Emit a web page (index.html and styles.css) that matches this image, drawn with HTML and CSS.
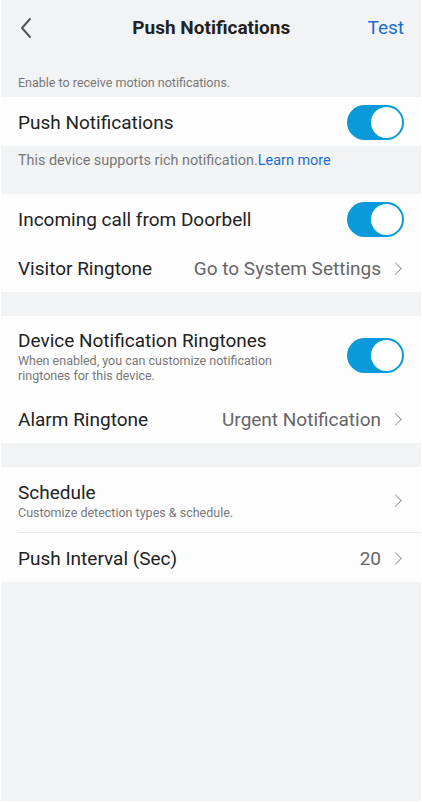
FILE: index.html
```html
<!DOCTYPE html>
<html lang="en">
<head>
    <meta charset="UTF-8">
    <meta name="viewport" content="width=device-width, initial-scale=1.0">
    <title>Push Notifications</title>
    <link rel="stylesheet" href="styles.css">
</head>
<body>
    <div class="screen">
        <header class="topbar">
            <svg class="back" width="14" height="22" viewBox="0 0 14 22">
                <path d="M11 2 L3 11 L11 20" fill="none" stroke="#555" stroke-width="2" stroke-linecap="round" stroke-linejoin="round"/>
            </svg>
            <h1>Push Notifications</h1>
            <span class="test">Test</span>
        </header>

        <p class="note note-top">Enable to receive motion notifications.</p>
        <div class="card">
            <div class="row">
                <span class="label">Push Notifications</span>
                <span class="switch on"></span>
            </div>
        </div>
        <p class="note note-bottom">This device supports rich notification.<a href="#">Learn more</a></p>

        <div class="card">
            <div class="row">
                <span class="label">Incoming call from Doorbell</span>
                <span class="switch on"></span>
            </div>
            <div class="row">
                <span class="label">Visitor Ringtone</span>
                <span class="value">Go to System Settings <i class="chev"></i></span>
            </div>
        </div>

        <div class="card gap">
            <div class="row tall">
                <div class="text">
                    <span class="label">Device Notification Ringtones</span>
                    <span class="sub">When enabled, you can customize notification ringtones for this device.</span>
                </div>
                <span class="switch on"></span>
            </div>
            <div class="row">
                <span class="label">Alarm Ringtone</span>
                <span class="value">Urgent Notification <i class="chev"></i></span>
            </div>
        </div>

        <div class="card gap">
            <div class="row schedule line">
                <div class="text">
                    <span class="label">Schedule</span>
                    <span class="sub">Customize detection types &amp; schedule.</span>
                </div>
                <span class="value"><i class="chev"></i></span>
            </div>
            <div class="row">
                <span class="label">Push Interval (Sec)</span>
                <span class="value">20 <i class="chev"></i></span>
            </div>
        </div>
    </div>
</body>
</html>
```

FILE: styles.css
```css
html, body {
    margin: 0;
    padding: 0;
    background: #fff;
}
body {
    font-family: Roboto, "Noto Sans", Arial, sans-serif;
    color: #222;
}
.screen {
    margin: 0 1px 1px 1px;
    min-height: 801px;
    background: #f2f3f5;
}
.topbar {
    height: 55px;
    display: flex;
    align-items: center;
    justify-content: space-between;
    padding: 0 17px 0 18px;
}
.topbar h1 {
    font-size: 19px;
    font-weight: bold;
    margin: 0 0 0 22px;
    color: #222;
}
.back {
    display: block;
}
.test {
    font-size: 19px;
    color: #1a6cd6;
}
.note {
    margin: 0;
    font-size: 12.5px;
    color: #777;
    padding-left: 17px;
}
.note-top {
    padding-top: 20px;
    height: 22px;
}
.note-bottom {
    font-size: 14.4px;
    padding-top: 6px;
    height: 42px;
}
.note a {
    color: #1a6cd6;
    text-decoration: none;
}
.card {
    background: #fdfdfe;
}
.card.gap {
    margin-top: 24px;
}
.row {
    box-sizing: border-box;
    height: 49px;
    display: flex;
    align-items: center;
    justify-content: space-between;
    padding: 1px 17px 0 17px;
}
.row.tall {
    height: 78px;
}
.row.schedule {
    height: 66px;
}
.row.line {
    border-bottom: 1px solid #e8e8ea;
    margin-left: 17px;
    padding-left: 0;
}
.label {
    font-size: 19px;
    color: #222;
}
.text {
    display: flex;
    flex-direction: column;
}
.text .sub {
    font-size: 12.5px;
    color: #777;
    line-height: 15px;
    max-width: 270px;
    margin-top: 1px;
}
.value {
    font-size: 19px;
    color: #666;
    display: flex;
    align-items: center;
}
.chev {
    display: inline-block;
    width: 8px;
    height: 8px;
    border-right: 1.6px solid #999;
    border-top: 1.6px solid #999;
    transform: rotate(45deg);
    margin: 0 4px 0 10px;
}
.switch {
    position: relative;
    width: 57px;
    height: 35px;
    border-radius: 18px;
    background: #0a9ad9;
    flex-shrink: 0;
}
.switch::after {
    content: "";
    position: absolute;
    top: 2px;
    right: 2px;
    width: 31px;
    height: 31px;
    border-radius: 50%;
    background: #fff;
}
```
